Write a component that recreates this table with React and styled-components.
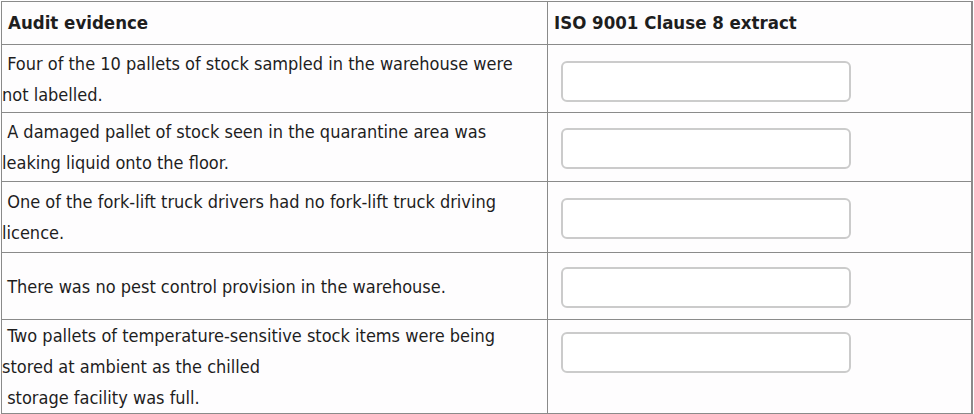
import React from 'react'
import styled, { createGlobalStyle } from 'styled-components'

const GlobalStyle = createGlobalStyle`
  html, body {
    margin: 0;
    padding: 0;
    background: #fefdfe;
  }
  body {
    font-family: "DejaVu Sans Condensed", "DejaVu Sans", sans-serif;
    color: #1e1e1e;
  }
`

const rows = [
    { h: 68, top: 16, lines: [' Four of the 10 pallets of stock sampled in the warehouse were', 'not labelled.'] },
    { h: 69, top: 15, lines: [' A damaged pallet of stock seen in the quarantine area was', 'leaking liquid onto the floor.'] },
    { h: 71, top: 16, lines: [' One of the fork-lift truck drivers had no fork-lift truck driving', 'licence.'] },
    { h: 67, top: 14, lines: [' There was no pest control provision in the warehouse.'] },
    { h: 93, top: 12, lines: [' Two pallets of temperature-sensitive stock items were being', 'stored at ambient as the chilled', ' storage facility was full.'] },
]

export default function App() {
    return (
        <>
            <GlobalStyle />
            <Table>
                <colgroup>
                    <col style={{ width: 546 }} />
                    <col />
                </colgroup>
                <thead>
                    <HeadRow>
                        <HeadCell>Audit evidence</HeadCell>
                        <HeadCell>ISO 9001 Clause 8 extract</HeadCell>
                    </HeadRow>
                </thead>
                <tbody>
                    {rows.map((r, i) => (
                        <Row key={i} $h={r.h}>
                            <EvidenceCell>
                                {r.lines.map((l, j) => <Line key={j}>{l}</Line>)}
                            </EvidenceCell>
                            <AnswerCell $top={r.top}>
                                <DropBox />
                            </AnswerCell>
                        </Row>
                    ))}
                </tbody>
            </Table>
        </>
    )
}

const Table = styled.table`
    border-collapse: collapse;
    margin: 1px 0 0 1px;
    width: 972px;
    table-layout: fixed;
    border: 1px solid #8a8a8a;
    border-right-width: 2px;
    border-bottom-width: 2px;
`

const HeadRow = styled.tr`
    height: 43px;
`

const HeadCell = styled.th`
    border: 1px solid #8a8a8a;
    text-align: left;
    font-weight: bold;
    font-size: 18.5px;
    padding: 0 0 2px 6px;
    vertical-align: middle;
    white-space: nowrap;
`

const Row = styled.tr`
    height: ${p => p.$h}px;
`

const EvidenceCell = styled.td`
    border: 1px solid #8a8a8a;
    padding: 0;
    vertical-align: middle;
    font-size: 18px;
    line-height: 31px;
`

const Line = styled.div`
    white-space: pre;
`

const AnswerCell = styled.td`
    border: 1px solid #8a8a8a;
    vertical-align: top;
    padding: ${p => p.$top}px 0 0 13px;
`

const DropBox = styled.div`
    width: 286px;
    height: 37px;
    border: 2px solid #cbcbcb;
    border-radius: 6px;
    background: #fff;
`
